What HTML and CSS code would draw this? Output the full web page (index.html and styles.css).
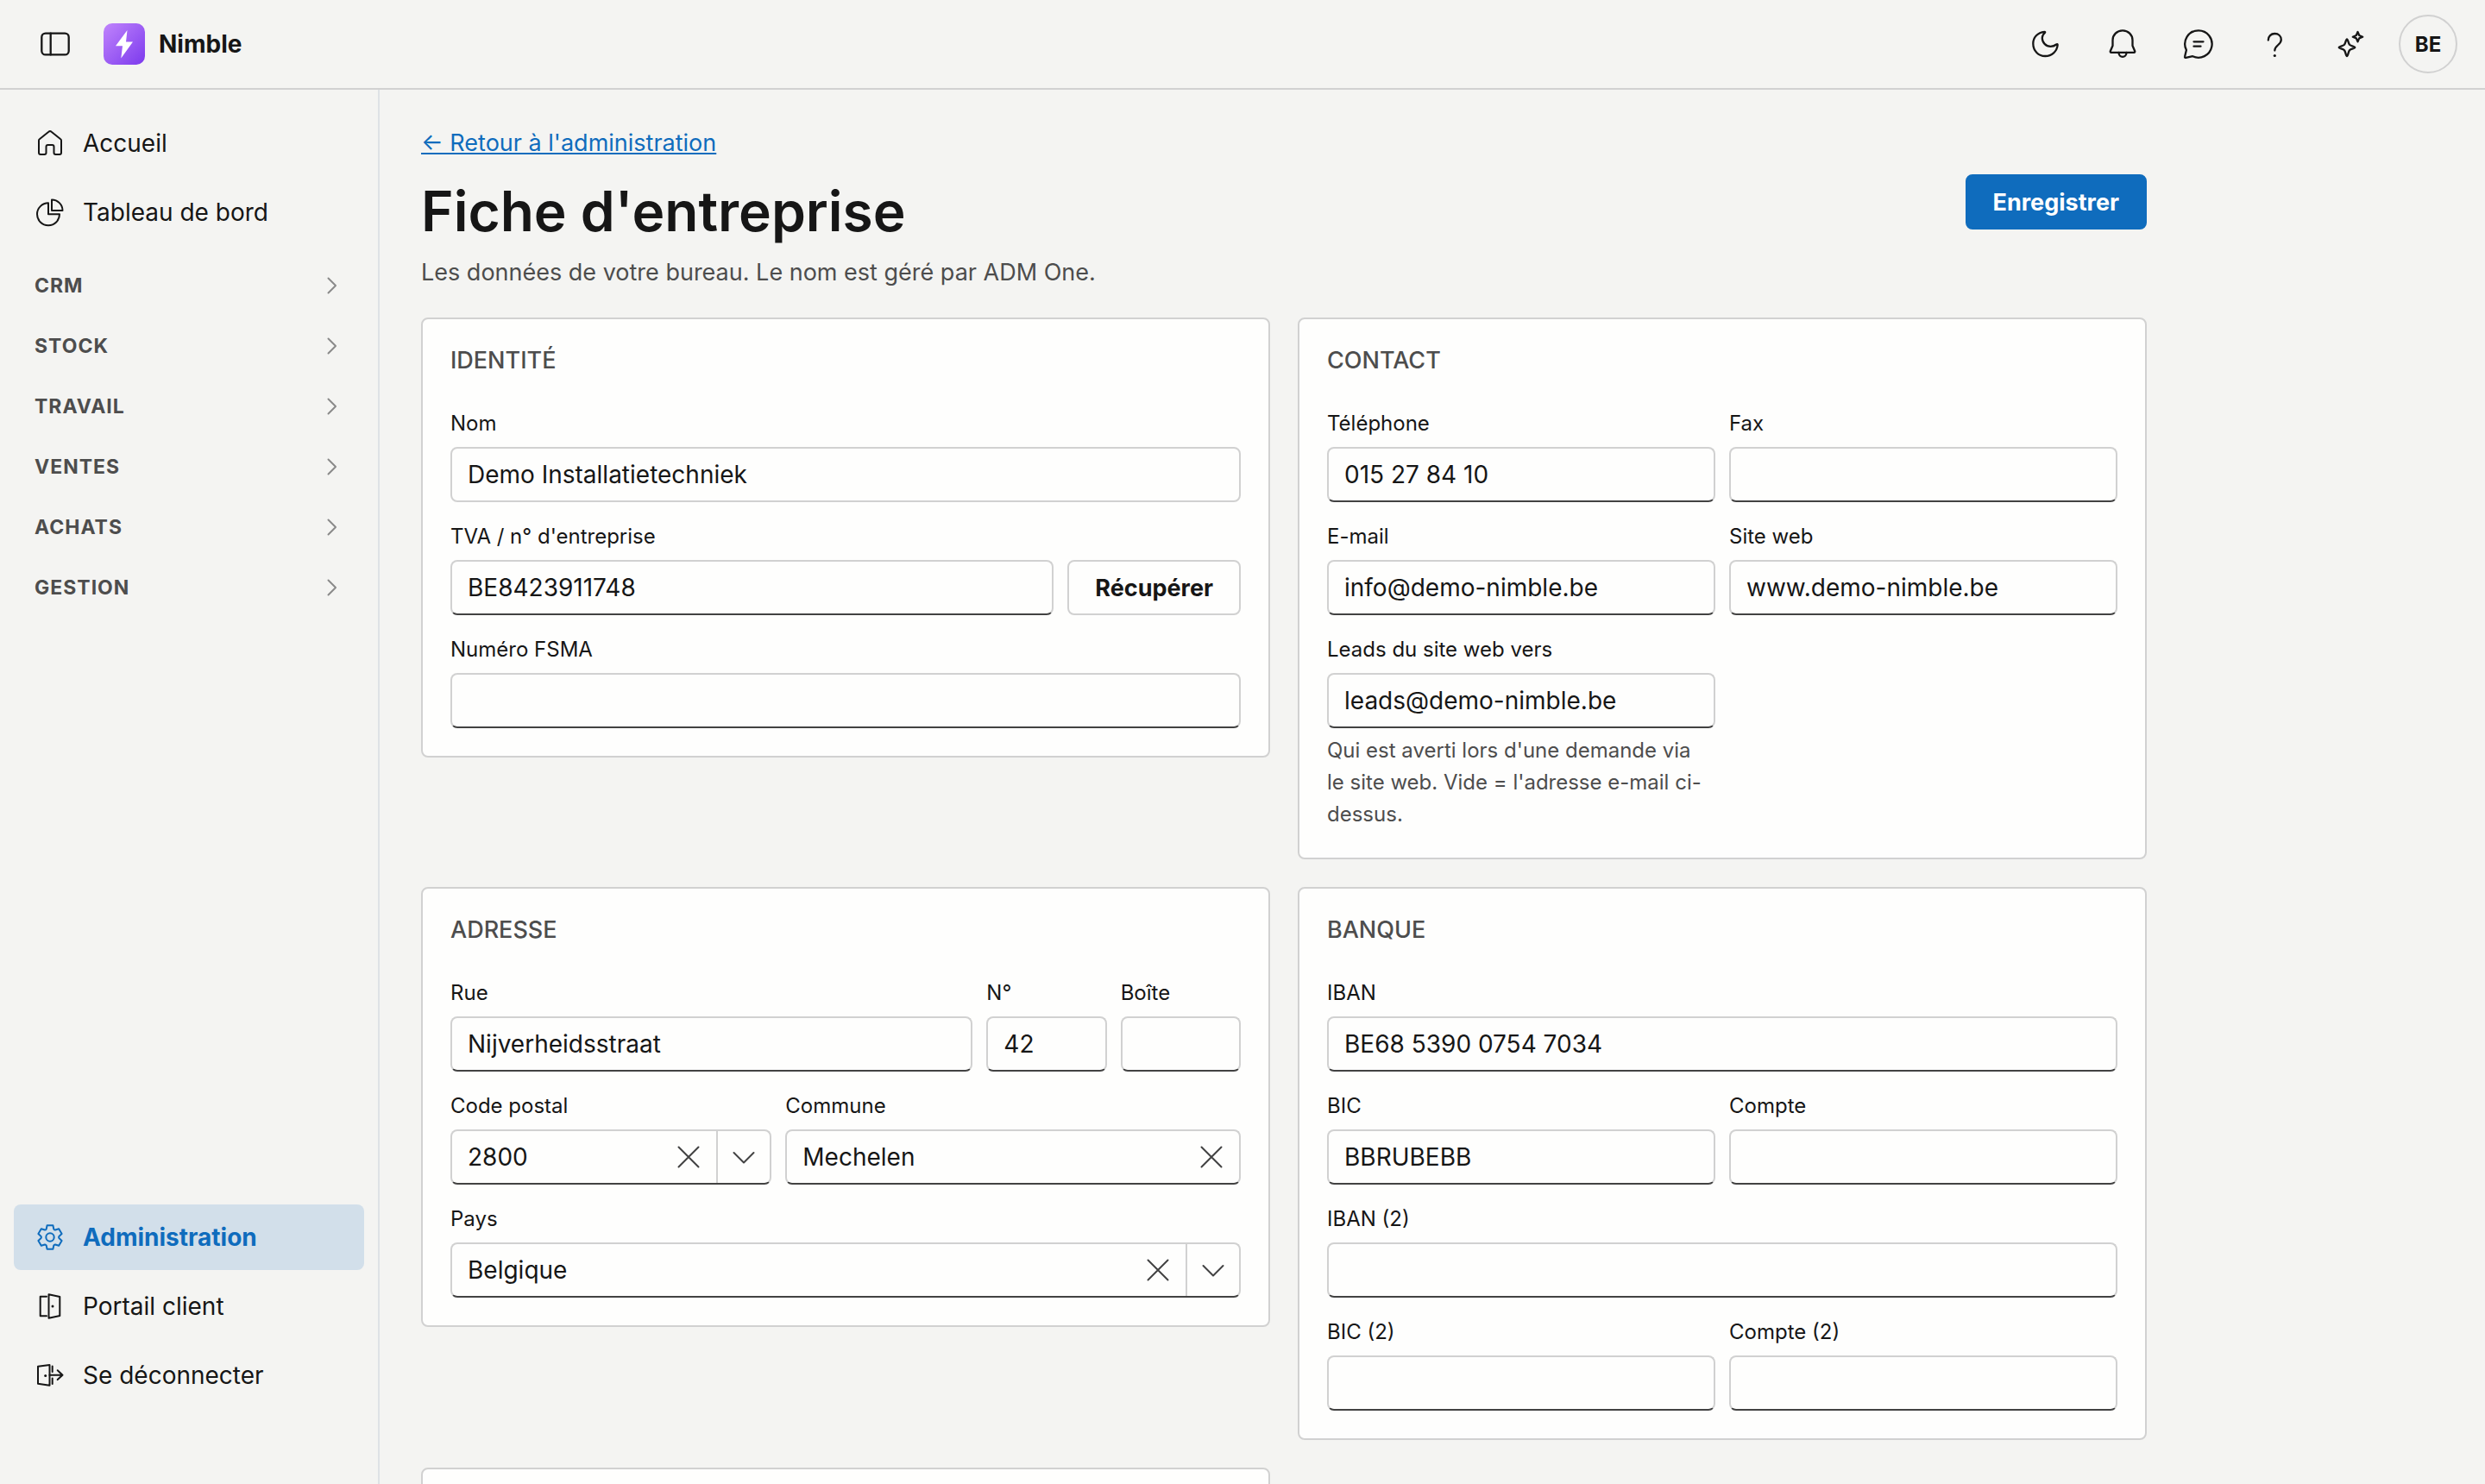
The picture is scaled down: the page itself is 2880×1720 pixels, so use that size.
FILE: index.html
```html
<!DOCTYPE html>
<html lang="fr">
<head>
    <meta charset="UTF-8">
    <title>Nimble - Fiche d'entreprise</title>
    <link rel="stylesheet" href="styles.css">
</head>
<body>
    <header class="topbar">
        <button type="button" class="icon-btn menu-btn" aria-label="Menu">
            <svg viewBox="0 0 48 48"><rect x="8.3" y="11.6" width="31.4" height="24.8" rx="4.5"/><path d="M18.7 11.6v24.8"/></svg>
        </button>
        <div class="brand">
            <svg class="logo" viewBox="0 0 48 48">
                <defs>
                    <linearGradient id="logo-bg" x1="0" y1="0" x2="1" y2="1">
                        <stop offset="0" stop-color="#c084fc"/>
                        <stop offset="1" stop-color="#7c3aed"/>
                    </linearGradient>
                </defs>
                <rect width="48" height="48" rx="10" fill="url(#logo-bg)"/>
                <path fill="#fff" d="M27.5 8 14 26.2h8L20.3 40.4 34 21.4h-8z"/>
            </svg>
            <span>Nimble</span>
        </div>
        <div class="tools">
            <button type="button" class="icon-btn" aria-label="Mode sombre">
                <svg viewBox="0 0 48 48"><path d="M21.5 9.8C13.5 10.5 8.3 16.5 8.3 23.5 8.3 32 14.5 38 22.3 38 30 38 36 32.5 36.7 25c0-1-.7-1-1.5-.5-2.2 1.8-4.2 2.3-6.7 2.3-5.5 0-9.7-4.5-9.7-9.8 0-2.2 1-4.2 3.1-6 .5-.7.3-1.2-.4-1.2z"/></svg>
            </button>
            <button type="button" class="icon-btn" aria-label="Notifications">
                <svg viewBox="0 0 48 48"><path d="M24 8.3c-6.5 0-11.5 5-11.5 11.2V26l-2.7 6.3c-.3.7.2 1.5.9 1.5h26.6c.7 0 1.2-.8.9-1.5L35.5 26v-6.5c0-6.2-5-11.2-11.5-11.2z"/><path d="M19.5 34a4.5 4.8 0 0 0 9 0"/></svg>
            </button>
            <button type="button" class="icon-btn" aria-label="Messages">
                <svg viewBox="0 0 48 48"><path d="M24 8.3a15.7 15.7 0 1 1-6.8 29.9L9.5 39.9c-1 .2-1.7-.4-1.4-1.4L9.9 31A15.7 15.7 0 0 1 24 8.3z"/><path d="M18.5 21.3h11M18.5 26.7h8"/></svg>
            </button>
            <button type="button" class="icon-btn" aria-label="Aide">
                <svg viewBox="0 0 48 48"><path d="M16.8 19.5c0-4.5 3.2-7.5 7.5-7.5 4.5 0 7.5 3 7.5 7 0 6-7.5 6.5-7.5 12.5"/><circle class="dot" cx="24.3" cy="37.5" r="1.6"/></svg>
            </button>
            <button type="button" class="icon-btn" aria-label="Assistant">
                <svg viewBox="0 0 48 48"><path d="M20 18.4c1.2 0 1.5 4.5 3 6.4 1.7 1.7 6.4 2 6.4 3.2s-4.7 1.5-6.4 3.2c-1.5 1.9-1.8 6.8-3 6.8s-1.5-4.9-3-6.8c-1.7-1.7-6.4-2-6.4-3.2s4.7-1.5 6.4-3.2c1.5-1.9 1.8-6.4 3-6.4z"/><path d="M32.5 10l1.7 4 4 1.7-4 1.7-1.7 4-1.7-4-4-1.7 4-1.7z"/></svg>
            </button>
        </div>
        <button type="button" class="avatar">BE</button>
    </header>

    <div class="layout">
        <nav class="sidebar">
            <a href="#" class="nav-link">
                <svg viewBox="0 0 40 40"><path d="M18.4 6.7a2.4 2.4 0 0 1 3.2 0L32.2 15.2a2 2 0 0 1 .8 1.6V31a2 2 0 0 1-2 2h-4.5a2 2 0 0 1-2-2v-7a2 2 0 0 0-2-2h-5a2 2 0 0 0-2 2v7a2 2 0 0 1-2 2H9a2 2 0 0 1-2-2V16.8a2 2 0 0 1 .8-1.6z"/></svg>
                Accueil
            </a>
            <a href="#" class="nav-link">
                <svg viewBox="0 0 40 40"><path d="M18 9.3A13 13 0 1 0 31 22.3H18z"/><path d="M22 5.5A12.5 12.5 0 0 1 34.5 18H22z"/></svg>
                Tableau de bord
            </a>
            <div class="nav-groups">
                <button type="button" class="nav-group">CRM <svg viewBox="0 0 24 24"><path d="M8.5 3.5 17 12l-8.5 8.5"/></svg></button>
                <button type="button" class="nav-group">STOCK <svg viewBox="0 0 24 24"><path d="M8.5 3.5 17 12l-8.5 8.5"/></svg></button>
                <button type="button" class="nav-group">TRAVAIL <svg viewBox="0 0 24 24"><path d="M8.5 3.5 17 12l-8.5 8.5"/></svg></button>
                <button type="button" class="nav-group">VENTES <svg viewBox="0 0 24 24"><path d="M8.5 3.5 17 12l-8.5 8.5"/></svg></button>
                <button type="button" class="nav-group">ACHATS <svg viewBox="0 0 24 24"><path d="M8.5 3.5 17 12l-8.5 8.5"/></svg></button>
                <button type="button" class="nav-group">GESTION <svg viewBox="0 0 24 24"><path d="M8.5 3.5 17 12l-8.5 8.5"/></svg></button>
            </div>
            <div class="nav-bottom">
                <a href="#" class="nav-link active">
                    <svg viewBox="-20 -20 40 40"><path d="M-3.4-13.7H3.4L4.3-9.5Q5-8.3 6.1-8.5L10.2-9.8 13.6-3.9 10.4-1Q9.7 0 10.4 1L13.6 3.9 10.2 9.8 6.1 8.5Q5 8.3 4.3 9.5L3.4 13.7H-3.4L-4.3 9.5Q-5 8.3-6.1 8.5L-10.2 9.8-13.6 3.9-10.4 1Q-9.7 0-10.4-1L-13.6-3.9-10.2-9.8-6.1-8.5Q-5-8.3-4.3-9.5Z"/><circle r="4.7"/></svg>
                    Administration
                </a>
                <a href="#" class="nav-link">
                    <svg viewBox="0 0 40 40"><path d="M16 8.7H8.7v22.6H16"/><path d="M18.5 6.2 31.3 9v22l-12.8 2.8z"/><circle class="dot" cx="23" cy="20" r="1.5"/></svg>
                    Portail client
                </a>
                <a href="#" class="nav-link">
                    <svg viewBox="0 0 40 40"><path d="M6 9.7 19.5 8v23.7L6 29.7z"/><path d="M22.7 9.5V16M22.7 23.5V30M19.5 19.7h15M28.7 14.3l5.8 5.4-5.8 5.4"/><circle class="dot" cx="14.7" cy="20.5" r="1.5"/></svg>
                    Se déconnecter
                </a>
            </div>
        </nav>

        <main class="content">
            <form class="page">
                <div class="page-head">
                    <div>
                        <a href="#" class="back-link">← Retour à l'administration</a>
                        <h1>Fiche d'entreprise</h1>
                        <p>Les données de votre bureau. Le nom est géré par ADM One.</p>
                    </div>
                    <button type="submit" class="btn btn-primary">Enregistrer</button>
                </div>

                <div class="cards">
                    <section class="card">
                        <h2>IDENTITÉ</h2>
                        <div class="fields">
                            <div class="field">
                                <label for="nom">Nom</label>
                                <input type="text" id="nom" value="Demo Installatietechniek" readonly>
                            </div>
                            <div class="field">
                                <label for="tva">TVA / n° d'entreprise</label>
                                <div class="with-btn">
                                    <input type="text" id="tva" value="BE8423911748">
                                    <button type="button" class="btn">Récupérer</button>
                                </div>
                            </div>
                            <div class="field">
                                <label for="fsma">Numéro FSMA</label>
                                <input type="text" id="fsma">
                            </div>
                        </div>
                    </section>

                    <section class="card">
                        <h2>CONTACT</h2>
                        <div class="fields">
                            <div class="field span-6">
                                <label for="tel">Téléphone</label>
                                <input type="tel" id="tel" value="015 27 84 10">
                            </div>
                            <div class="field span-6">
                                <label for="fax">Fax</label>
                                <input type="tel" id="fax">
                            </div>
                            <div class="field span-6">
                                <label for="email">E-mail</label>
                                <input type="email" id="email" value="info@demo-nimble.be">
                            </div>
                            <div class="field span-6">
                                <label for="web">Site web</label>
                                <input type="text" id="web" value="www.demo-nimble.be">
                            </div>
                            <div class="field span-6">
                                <label for="leads">Leads du site web vers</label>
                                <input type="email" id="leads" value="leads@demo-nimble.be">
                                <p class="hint">Qui est averti lors d'une demande via le site web. Vide = l'adresse e-mail ci-dessus.</p>
                            </div>
                        </div>
                    </section>

                    <section class="card">
                        <h2>ADRESSE</h2>
                        <div class="fields">
                            <div class="field span-8">
                                <label for="rue">Rue</label>
                                <input type="text" id="rue" value="Nijverheidsstraat">
                            </div>
                            <div class="field span-2">
                                <label for="numero">N°</label>
                                <input type="text" id="numero" value="42">
                            </div>
                            <div class="field span-2">
                                <label for="boite">Boîte</label>
                                <input type="text" id="boite">
                            </div>
                            <div class="field span-5">
                                <label for="cp">Code postal</label>
                                <div class="combo">
                                    <input type="text" id="cp" value="2800">
                                    <button type="button" class="clear" aria-label="Effacer"><svg viewBox="0 0 32 32"><path d="M4.5 4.5l23 23M27.5 4.5l-23 23"/></svg></button>
                                    <button type="button" class="caret" aria-label="Ouvrir"><svg viewBox="0 0 32 32"><path d="M4.5 11 16 22.5 27.5 11"/></svg></button>
                                </div>
                            </div>
                            <div class="field span-7">
                                <label for="commune">Commune</label>
                                <div class="combo">
                                    <input type="text" id="commune" value="Mechelen">
                                    <button type="button" class="clear" aria-label="Effacer"><svg viewBox="0 0 32 32"><path d="M4.5 4.5l23 23M27.5 4.5l-23 23"/></svg></button>
                                </div>
                            </div>
                            <div class="field">
                                <label for="pays">Pays</label>
                                <div class="combo">
                                    <input type="text" id="pays" value="Belgique">
                                    <button type="button" class="clear" aria-label="Effacer"><svg viewBox="0 0 32 32"><path d="M4.5 4.5l23 23M27.5 4.5l-23 23"/></svg></button>
                                    <button type="button" class="caret" aria-label="Ouvrir"><svg viewBox="0 0 32 32"><path d="M4.5 11 16 22.5 27.5 11"/></svg></button>
                                </div>
                            </div>
                        </div>
                    </section>

                    <section class="card">
                        <h2>BANQUE</h2>
                        <div class="fields">
                            <div class="field">
                                <label for="iban">IBAN</label>
                                <input type="text" id="iban" value="BE68 5390 0754 7034">
                            </div>
                            <div class="field span-6">
                                <label for="bic">BIC</label>
                                <input type="text" id="bic" value="BBRUBEBB">
                            </div>
                            <div class="field span-6">
                                <label for="compte">Compte</label>
                                <input type="text" id="compte">
                            </div>
                            <div class="field">
                                <label for="iban2">IBAN (2)</label>
                                <input type="text" id="iban2">
                            </div>
                            <div class="field span-6">
                                <label for="bic2">BIC (2)</label>
                                <input type="text" id="bic2">
                            </div>
                            <div class="field span-6">
                                <label for="compte2">Compte (2)</label>
                                <input type="text" id="compte2">
                            </div>
                        </div>
                    </section>

                    <section class="card"></section>
                </div>
            </form>
        </main>
    </div>
</body>
</html>
```
FILE: styles.css
```css
* {
    box-sizing: border-box;
}

body {
    margin: 0;
    height: 100vh;
    display: flex;
    flex-direction: column;
    font-family: Inter, "Liberation Sans", sans-serif;
    font-size: 28px;
    color: #161616;
    background: #f4f4f2;
}

h1, h2, p {
    margin: 0;
}

button, input {
    font: inherit;
    color: inherit;
}

button {
    padding: 0;
    border: none;
    background: none;
    cursor: pointer;
}

svg {
    display: block;
    flex: none;
    fill: none;
    stroke: currentColor;
    stroke-width: 2;
    stroke-linecap: round;
    stroke-linejoin: round;
}

svg .dot {
    fill: currentColor;
    stroke: none;
}

/* Top bar */
.topbar {
    display: flex;
    align-items: center;
    flex: none;
    height: 104px;
    padding: 0 32px 0 40px;
    border-bottom: 2px solid #d1d1d1;
}

.icon-btn {
    display: flex;
    align-items: center;
    justify-content: center;
    width: 72px;
    height: 72px;
}

.icon-btn svg {
    width: 48px;
    height: 48px;
    stroke-width: 2.3;
}

.menu-btn {
    width: 48px;
    margin-right: 32px;
}

.brand {
    display: flex;
    align-items: center;
    gap: 16px;
    font-weight: 700;
}

.logo {
    width: 48px;
    height: 48px;
    stroke: none;
}

.tools {
    display: flex;
    gap: 16px;
    margin: 0 20px 0 auto;
}

.avatar {
    width: 68px;
    height: 68px;
    border: 2px solid #d1d1d1;
    border-radius: 50%;
    font-size: 24px;
    font-weight: 700;
}

/* Sidebar */
.layout {
    display: flex;
    flex: 1;
    min-height: 0;
}

.sidebar {
    display: flex;
    flex-direction: column;
    gap: 4px;
    flex: none;
    width: 440px;
    padding: 24px 16px 88px;
    border-right: 2px solid #dee2e6;
}

.nav-link {
    display: flex;
    align-items: center;
    gap: 18px;
    height: 76px;
    padding: 0 22px;
    border-radius: 8px;
    color: inherit;
    text-decoration: none;
}

.nav-link svg {
    width: 40px;
    height: 40px;
}

.nav-link.active {
    color: #0f6cbd;
    background: #d2dfea;
    font-weight: 700;
}

.nav-groups {
    display: flex;
    flex-direction: column;
    margin-top: 8px;
}

.nav-group {
    display: flex;
    align-items: center;
    justify-content: space-between;
    height: 70px;
    padding: 0 26px 0 24px;
    font-size: 23px;
    font-weight: 700;
    letter-spacing: 1px;
    color: #4d4d4d;
}

.nav-group svg {
    width: 24px;
    height: 24px;
    color: #8a8a8a;
}

.nav-bottom {
    display: flex;
    flex-direction: column;
    gap: 4px;
    margin-top: auto;
}

/* Page */
.content {
    flex: 1;
    min-width: 0;
    padding: 28px 48px;
    overflow: hidden auto;
    scrollbar-width: none;
}

.page {
    max-width: 2000px;
}

.page-head {
    display: flex;
    align-items: center;
    justify-content: space-between;
    margin-bottom: 32px;
}

.back-link {
    display: block;
    width: max-content;
    margin: 14px 0;
    font-size: 27px;
    line-height: 40px;
    color: #0f6cbd;
}

.page-head h1 {
    margin-bottom: 6px;
    font-size: 64px;
    font-weight: 600;
    line-height: 90px;
}

.page-head p {
    font-size: 27px;
    line-height: 40px;
    color: #4d4d4d;
}

.btn {
    height: 64px;
    padding: 0 30px;
    border: 2px solid #d1d1d1;
    border-radius: 8px;
    font-size: 27px;
    font-weight: 700;
}

.btn-primary {
    border-color: #0f6cbd;
    color: #fff;
    background: #0f6cbd;
}

/* Cards */
.cards {
    display: grid;
    grid-template-columns: 1fr 1fr;
    align-items: start;
    gap: 32px;
}

.card {
    min-height: 200px;
    padding: 32px;
    border: 2px solid #d1d1d1;
    border-radius: 8px;
    background: #fefefd;
}

.card h2 {
    margin-bottom: 40px;
    font-size: 27px;
    font-weight: 500;
    line-height: 32px;
    color: #4d4d4d;
}

.fields {
    display: grid;
    grid-template-columns: repeat(12, 1fr);
    gap: 23px 16px;
}

.field {
    grid-column: span 12;
    min-width: 0;
}

.span-2 { grid-column: span 2; }
.span-5 { grid-column: span 5; }
.span-6 { grid-column: span 6; }
.span-7 { grid-column: span 7; }
.span-8 { grid-column: span 8; }

label {
    display: block;
    margin-bottom: 10px;
    font-size: 24px;
    line-height: 34px;
}

input, .combo {
    display: block;
    width: 100%;
    height: 64px;
    border: 2px solid #d1d1d1;
    border-bottom-color: #424242;
    border-radius: 8px;
    background: #fefefd;
}

input {
    padding: 0 18px;
}

input[readonly] {
    border-color: #d1d1d1;
}

.with-btn {
    display: flex;
    gap: 16px;
}

.with-btn input {
    flex: 1;
    min-width: 0;
}

.combo {
    display: flex;
    overflow: hidden;
}

.combo input {
    flex: 1;
    min-width: 0;
    height: 60px;
    border: none;
    background: none;
}

.combo button {
    display: flex;
    align-items: center;
    justify-content: center;
    color: #424242;
}

.combo svg {
    width: 32px;
    height: 32px;
}

.clear {
    width: 64px;
}

.caret {
    width: 62px;
    border-left: 2px solid #d1d1d1;
}

.hint {
    margin-top: 7px;
    padding-right: 8px;
    font-size: 24px;
    line-height: 37px;
    color: #4d4d4d;
}
```
